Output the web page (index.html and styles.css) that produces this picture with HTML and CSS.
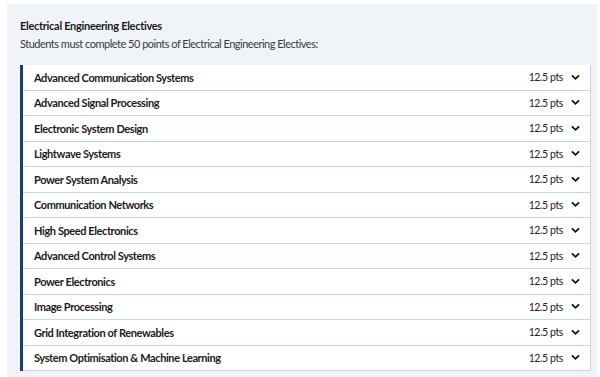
FILE: index.html
```html
<!DOCTYPE html>
<html lang="en">
<head>
    <meta charset="UTF-8">
    <meta name="viewport" content="width=device-width, initial-scale=1.0">
    <title>Electrical Engineering Electives</title>
    <link rel="stylesheet" href="styles.css">
</head>
<body>
    <div class="panel">
        <h2 class="panel-title">Electrical Engineering Electives</h2>
        <p class="panel-desc">Students must complete 50 points of Electrical Engineering Electives:</p>

        <ul class="course-list">
            <li class="course"><span class="course-name">Advanced Communication Systems</span><span class="pts">12.5 pts</span><svg class="chevron" viewBox="0 0 10 7"><path d="M1 1.2 L5 5 L9 1.2"/></svg></li>
            <li class="course"><span class="course-name">Advanced Signal Processing</span><span class="pts">12.5 pts</span><svg class="chevron" viewBox="0 0 10 7"><path d="M1 1.2 L5 5 L9 1.2"/></svg></li>
            <li class="course"><span class="course-name">Electronic System Design</span><span class="pts">12.5 pts</span><svg class="chevron" viewBox="0 0 10 7"><path d="M1 1.2 L5 5 L9 1.2"/></svg></li>
            <li class="course"><span class="course-name">Lightwave Systems</span><span class="pts">12.5 pts</span><svg class="chevron" viewBox="0 0 10 7"><path d="M1 1.2 L5 5 L9 1.2"/></svg></li>
            <li class="course"><span class="course-name">Power System Analysis</span><span class="pts">12.5 pts</span><svg class="chevron" viewBox="0 0 10 7"><path d="M1 1.2 L5 5 L9 1.2"/></svg></li>
            <li class="course"><span class="course-name">Communication Networks</span><span class="pts">12.5 pts</span><svg class="chevron" viewBox="0 0 10 7"><path d="M1 1.2 L5 5 L9 1.2"/></svg></li>
            <li class="course"><span class="course-name">High Speed Electronics</span><span class="pts">12.5 pts</span><svg class="chevron" viewBox="0 0 10 7"><path d="M1 1.2 L5 5 L9 1.2"/></svg></li>
            <li class="course"><span class="course-name">Advanced Control Systems</span><span class="pts">12.5 pts</span><svg class="chevron" viewBox="0 0 10 7"><path d="M1 1.2 L5 5 L9 1.2"/></svg></li>
            <li class="course"><span class="course-name">Power Electronics</span><span class="pts">12.5 pts</span><svg class="chevron" viewBox="0 0 10 7"><path d="M1 1.2 L5 5 L9 1.2"/></svg></li>
            <li class="course"><span class="course-name">Image Processing</span><span class="pts">12.5 pts</span><svg class="chevron" viewBox="0 0 10 7"><path d="M1 1.2 L5 5 L9 1.2"/></svg></li>
            <li class="course"><span class="course-name">Grid Integration of Renewables</span><span class="pts">12.5 pts</span><svg class="chevron" viewBox="0 0 10 7"><path d="M1 1.2 L5 5 L9 1.2"/></svg></li>
            <li class="course"><span class="course-name">System Optimisation &amp; Machine Learning</span><span class="pts">12.5 pts</span><svg class="chevron" viewBox="0 0 10 7"><path d="M1 1.2 L5 5 L9 1.2"/></svg></li>
        </ul>
    </div>
</body>
</html>
```

FILE: styles.css
```css
body {
    font-family: Lato, "Liberation Sans", sans-serif;
    background-color: #ffffff;
    color: #1a1a1a;
    margin: 0;
    padding: 4px 3px 0 7px;
}

.panel {
    background-color: #f0f3f8;
    padding: 14px 6px 10px 13px;
    min-height: 360px;
}

.panel-title {
    font-size: 11px;
    font-weight: bold;
    letter-spacing: -0.3px;
    margin: 0;
    line-height: 16px;
}

.panel-desc {
    font-size: 11px;
    color: #3a3a3a;
    letter-spacing: -0.5px;
    margin: 2px 0 0;
    line-height: 16px;
}

.course-list {
    list-style: none;
    margin: 13px 0 0;
    padding: 0;
    border-left: 3px solid #1d3c78;
}

.course {
    display: flex;
    align-items: center;
    height: 24.5px;
    background-color: #ffffff;
    border-bottom: 1px solid #c3d6ef;
    border-right: 1px solid #c3d6ef;
    padding: 0 10px 0 11px;
    font-size: 11px;
}

.course-name {
    flex: 1;
    font-weight: bold;
    letter-spacing: -0.4px;
}

.pts {
    font-size: 10.5px;
    letter-spacing: -0.4px;
    color: #222;
    margin-right: 8px;
}

.chevron {
    width: 9px;
    height: 7px;
    fill: none;
    stroke: #111;
    stroke-width: 2;
}
```
